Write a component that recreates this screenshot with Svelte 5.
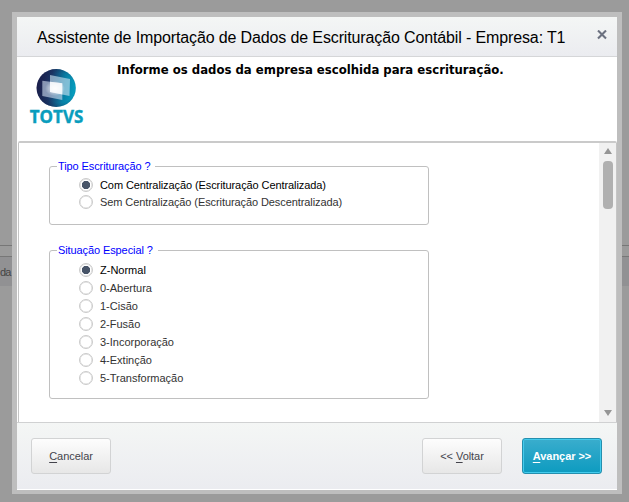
<script lang="ts">
  let tipo = $state(0);
  let situacao = $state(0);

  const tipos = [
    'Com Centralização (Escrituração Centralizada)',
    'Sem Centralização (Escrituração Descentralizada)',
  ];

  const situacoes = [
    'Z-Normal',
    '0-Abertura',
    '1-Cisão',
    '2-Fusão',
    '3-Incorporação',
    '4-Extinção',
    '5-Transformação',
  ];
</script>

<div class="backdrop">
  <div class="strip"><span>da</span></div>

  <div class="dialog">
    <header>
      <h1>Assistente de Importação de Dados de Escrituração Contábil - Empresa: T1</h1>
      <button class="close" aria-label="Fechar">
        <svg width="10" height="10" viewBox="0 0 10 10">
          <path d="M1 .5L9 8.5M9 .5L1 8.5" stroke="#6c7180" stroke-width="2.1" />
        </svg>
      </button>
    </header>

    <div class="intro">
      <svg class="logo" width="60" height="70" viewBox="0 0 60 70">
        <defs>
          <linearGradient id="ball" x1="0" y1=".4" x2="1" y2=".55">
            <stop offset="0" stop-color="#201b48" />
            <stop offset=".35" stop-color="#1a3565" />
            <stop offset=".7" stop-color="#087fa5" />
            <stop offset="1" stop-color="#05a0c0" />
          </linearGradient>
          <radialGradient id="shade" cx=".58" cy=".5" r=".6">
            <stop offset=".65" stop-color="#152550" stop-opacity="0" />
            <stop offset="1" stop-color="#152550" stop-opacity=".55" />
          </radialGradient>
          <radialGradient id="glow">
            <stop offset="0" stop-color="#fff" stop-opacity=".9" />
            <stop offset="1" stop-color="#fff" stop-opacity="0" />
          </radialGradient>
        </defs>
        <ellipse cx="28.2" cy="20" rx="19.6" ry="19" fill="url(#ball)" />
        <ellipse cx="28.2" cy="20" rx="19.6" ry="19" fill="url(#shade)" />
        <path d="M22 7L42 11L41.5 28L22 24Z" fill="#c0dcec" opacity=".65" />
        <path d="M14.3 12.7L34.3 15.3V32L14.3 28Z" fill="#ccd8ec" opacity=".62" />
        <path d="M22 13.7L34.3 15.3V26.5L22 24Z" fill="#fff" opacity=".8" />
        <ellipse cx="27" cy="20.5" rx="10" ry="7.5" fill="url(#glow)" />
        <text x="1.8" y="55" textLength="53.5" lengthAdjust="spacingAndGlyphs">TOTVS</text>
      </svg>
      <p>Informe os dados da empresa escolhida para escrituração.</p>
    </div>

    <div class="panel">
      <div class="form">
        <fieldset class="tipo">
          <legend>Tipo Escrituração ?</legend>
          {#each tipos as item, i}
            <label class:selected={tipo === i}>
              <input type="radio" name="tipo" value={i} bind:group={tipo} />
              <span>{item}</span>
            </label>
          {/each}
        </fieldset>

        <fieldset class="situacao">
          <legend>Situação Especial ?</legend>
          {#each situacoes as item, i}
            <label class:selected={situacao === i}>
              <input type="radio" name="situacao" value={i} bind:group={situacao} />
              <span>{item}</span>
            </label>
          {/each}
        </fieldset>
      </div>

      <div class="scrollbar">
        <svg width="8" height="6" viewBox="0 0 8 6"><path d="M4 0L8 6H0Z" fill="#959595" /></svg>
        <div class="thumb"></div>
        <svg class="down" width="8" height="6" viewBox="0 0 8 6"><path d="M0 0H8L4 6Z" fill="#959595" /></svg>
      </div>
    </div>

    <footer>
      <button class="btn"><u>C</u>ancelar</button>
      <button class="btn back">&lt;&lt; <u>V</u>oltar</button>
      <button class="btn next"><u>A</u>vançar &gt;&gt;</button>
    </footer>
  </div>
</div>

<style>
  :global(body) {
    margin: 0;
    overflow: hidden;
  }

  .backdrop {
    position: relative;
    box-sizing: border-box;
    width: 629px;
    height: 502px;
    padding: 12px 0 0 12px;
    background: #9b9b9b;
    font-family: "Liberation Sans", Arial, sans-serif;
    font-size: 11px;
  }

  /* page rows that stay visible behind the dialog */
  .strip {
    position: absolute;
    top: 245px;
    left: 0;
    width: 100%;
    height: 41px;
    box-sizing: border-box;
    border-top: 1px solid #777;
    background: linear-gradient(#9b9b9b 10px, #777 10px, #777 11px, #919193 11px);
    color: #444;
  }

  .strip span {
    display: block;
    margin-top: 20px;
    line-height: 13px;
    letter-spacing: -0.8px;
  }

  .dialog {
    position: relative;
    box-sizing: border-box;
    width: 610px;
    height: 482px;
    border: 5px solid #bebebe;
    border-bottom-width: 4px;
    background: #fff;
    display: flex;
    flex-direction: column;
  }

  header {
    height: 39px;
    flex: none;
    display: flex;
    justify-content: space-between;
    border-bottom: 1px solid #d5d6d8;
    background: linear-gradient(#f4f6f5, #ebecf0);
  }

  h1 {
    margin: 11px 0 0 20px;
    font-size: 16px;
    font-weight: 400;
    line-height: 19px;
    letter-spacing: -0.13px;
    white-space: nowrap;
    color: #000;
  }

  .close {
    width: 10px;
    height: 10px;
    margin: 13px 10px 0 0;
    padding: 0;
    border: 0;
    background: none;
  }

  .close svg {
    display: block;
  }

  .intro {
    height: 84px;
    flex: none;
    display: flex;
  }

  .logo {
    margin: 11px 0 0 11px;
  }

  .logo text {
    font: 700 18px "Open Sans", sans-serif;
    fill: #099dbd;
    stroke: #099dbd;
    stroke-width: 0.4px;
  }

  .intro p {
    margin: 6px 0 0 29px;
    font: 700 11.7px/14px "DejaVu Sans", Verdana, sans-serif;
    white-space: nowrap;
    color: #000;
  }

  .panel {
    height: 279px;
    flex: none;
    display: flex;
    margin-left: 1px;
    border: solid #c5c5c5;
    border-width: 2px 1px 0;
    border-top-color: #cacaca;
    border-radius: 2px 2px 0 0;
  }

  .form {
    flex: 1;
    padding: 17px 0 0 30px;
  }

  fieldset {
    box-sizing: border-box;
    width: 380px;
    margin: 0;
    padding: 0 0 0 29px;
    border: 1px solid #c0c0c0;
    border-radius: 3px;
  }

  .tipo {
    height: 65px;
  }

  .situacao {
    height: 155px;
    margin-top: 19px;
  }

  legend {
    margin-left: -22px;
    padding: 0 5px 0 1px;
    line-height: 13px;
    letter-spacing: -0.1px;
    color: #00f;
    white-space: nowrap;
  }

  label {
    display: flex;
    align-items: center;
    gap: 7px;
    height: 18px;
    color: #333;
    white-space: nowrap;
  }

  .tipo label {
    height: 17px;
    letter-spacing: -0.09px;
  }

  .tipo legend + label {
    margin-top: 3px;
  }

  .situacao legend + label {
    margin-top: 4px;
  }

  label.selected {
    color: #000;
  }

  input {
    appearance: none;
    box-sizing: border-box;
    width: 14px;
    height: 14px;
    margin: 0;
    border: 1px solid #cbcbcb;
    border-radius: 50%;
    box-shadow: inset 0 0 0 0.5px #d4d4d4;
    background: #fff;
  }

  input:checked {
    background: radial-gradient(circle, #475468 3.8px, #fff 4.5px);
  }

  .scrollbar {
    width: 17px;
    display: flex;
    flex-direction: column;
    align-items: center;
    background: #f1f1f1;
    padding: 5px 0 6px;
    box-sizing: border-box;
  }

  .thumb {
    width: 10px;
    height: 48px;
    margin-top: 7px;
    border-radius: 4px;
    background: #b0b0b0;
  }

  .down {
    margin-top: auto;
  }

  footer {
    height: 67px;
    flex: none;
    box-sizing: border-box;
    display: flex;
    padding: 15px 15px 0 14px;
    border-top: 1px solid #d0d1d2;
    background: linear-gradient(#f4f6f5, #ebecf0);
  }

  .btn {
    box-sizing: border-box;
    width: 80px;
    height: 36px;
    padding: 0;
    border: 1px solid #d2d3d4;
    border-radius: 3px;
    background: linear-gradient(#fdfdfd, #e7e7e7);
    font: 11px "Liberation Sans", Arial, sans-serif;
    letter-spacing: -0.05px;
    color: #44444c;
  }

  .btn u {
    text-underline-offset: 2px;
  }

  .back {
    margin-left: auto;
  }

  .next {
    margin-left: 20px;
    border-color: #248fae;
    background: linear-gradient(#3aadcd, #0d9bc0);
    box-shadow: inset 0 0 0 1px #43cbed;
    font-weight: 700;
    color: #fff;
  }
</style>
